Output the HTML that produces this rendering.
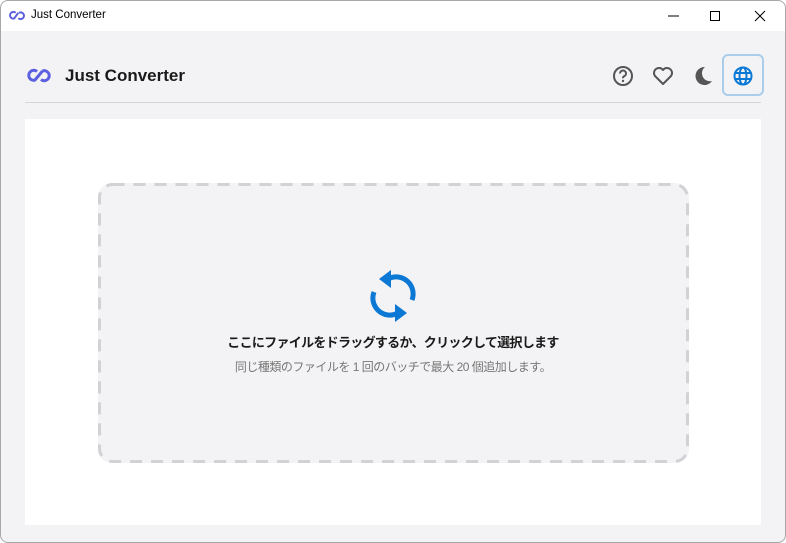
<!DOCTYPE html>
<html><head><meta charset="utf-8"><style>
*{margin:0;padding:0;box-sizing:border-box}
body{width:786px;height:543px;overflow:hidden;font-family:"Liberation Sans","Noto Sans CJK JP",sans-serif;background:#fff}
.win{position:absolute;left:0;top:0;width:786px;height:543px;border-radius:8px;overflow:hidden;background:#f3f3f5}
.bd{position:absolute;left:0;top:0;width:786px;height:543px;border:1px solid #a8a8a8;border-radius:8px;pointer-events:none}
.tb{position:absolute;left:0;top:0;width:100%;height:31px;background:#fff}
.tb .t{position:absolute;left:31px;top:9px;font-size:11.5px;color:#000}
.hd{position:absolute;left:65px;top:66px;font-size:17px;font-weight:bold;color:#1a1a1a}
.line{position:absolute;left:25px;top:102px;width:736px;height:1px;background:#d4d4d6}
.panel{position:absolute;left:25px;top:119px;width:736px;height:406px;background:#fff}
.drop{position:absolute;left:98px;top:183px;width:591px;height:280px;background:#f3f3f5;border-radius:14px}
.m1{position:absolute;left:0;width:786px;text-align:center;top:332px;font-size:13px;letter-spacing:-0.7px;font-weight:bold;color:#1a1a1a}
.m2{position:absolute;left:0;width:786px;text-align:center;top:358px;font-size:12px;letter-spacing:-0.5px;color:#777}
.gb{position:absolute;left:722px;top:54px;width:42px;height:42px;border:2px solid #a9cdeb;border-radius:6px;background:#f3f3f5}
</style></head><body><div class="win">
<div class="tb">
<svg style="position:absolute;left:9px;top:9px" width="16" height="13" viewBox="0 0 24 16"><path d="M10 4 A5 5 0 1 0 9 12 M14 12 A5 5 0 1 0 15 4 M8 12 L14 4" fill="none" stroke="#5b5fe0" stroke-width="3"/></svg>
<span class="t">Just Converter</span>
<svg style="position:absolute;left:667px;top:8px" width="100" height="16"><path d="M1 8h11" stroke="#000"/><path d="M43.5 3.5h9v9h-9z" fill="none" stroke="#000"/><path d="M88 3l10 10M98 3l-10 10" stroke="#000"/></svg>
</div>
<svg style="position:absolute;left:26px;top:67px" width="26" height="17" viewBox="0 0 26 17"><path d="M11 4.5 A5 5 0 1 0 9.5 13 M15 12.5 A5 5 0 1 0 16.5 4 M9 13 L16.5 4" fill="none" stroke="#5b5fe0" stroke-width="3"/></svg>
<div class="hd">Just Converter</div>
<svg style="position:absolute;left:612px;top:65px" width="22" height="22" viewBox="0 0 22 22"><circle cx="11" cy="11" r="9" fill="none" stroke="#555" stroke-width="2"/><path d="M8 8.5a3 3 0 1 1 4 2.8c-.8.4-1 1-1 2" fill="none" stroke="#555" stroke-width="2"/><circle cx="11" cy="16" r="1.2" fill="#555"/></svg>
<svg style="position:absolute;left:652px;top:66px" width="22" height="20" viewBox="0 0 22 20"><path d="M11 18 L3 10 A4.5 4.5 0 0 1 11 4 A4.5 4.5 0 0 1 19 10 Z" fill="none" stroke="#555" stroke-width="2" stroke-linejoin="round"/></svg>
<svg style="position:absolute;left:692px;top:65px" width="22" height="22" viewBox="0 0 22 22"><path d="M13 2 A9 9 0 1 0 20 16 A8 8 0 0 1 13 2Z" fill="#555"/></svg>
<div class="gb"></div>
<svg style="position:absolute;left:732px;top:65px" width="22" height="22" viewBox="0 0 22 22"><g fill="none" stroke="#0a78d4" stroke-width="2"><circle cx="11" cy="11" r="8.5"/><ellipse cx="11" cy="11" rx="3.5" ry="8.5"/><path d="M2.5 8h17M2.5 14h17"/></g></svg>
<div class="line"></div>
<div class="panel"></div>
<div class="drop"></div>
<svg style="position:absolute;left:98px;top:183px" width="591" height="280"><rect x="1.5" y="1.5" width="588" height="277" rx="13" fill="none" stroke="#d2d2d6" stroke-width="3" stroke-dasharray="12 9"/></svg>
<svg style="position:absolute;left:366px;top:270px" width="54" height="52" viewBox="0 0 54 52"><g fill="none" stroke="#0a78d4" stroke-width="5"><path d="M22 9 A17 17 0 0 1 46 30"/><path d="M32 43 A17 17 0 0 1 8 22"/></g><path d="M13 9 L25 0 L25 18Z" fill="#0a78d4"/><path d="M41 43 L29 34 L29 52Z" fill="#0a78d4"/></svg>
<div class="m1">ここにファイルをドラッグするか、クリックして選択します</div>
<div class="m2">同じ種類のファイルを 1 回のバッチで最大 20 個追加します。</div>
</div><div class="bd"></div></body></html>
